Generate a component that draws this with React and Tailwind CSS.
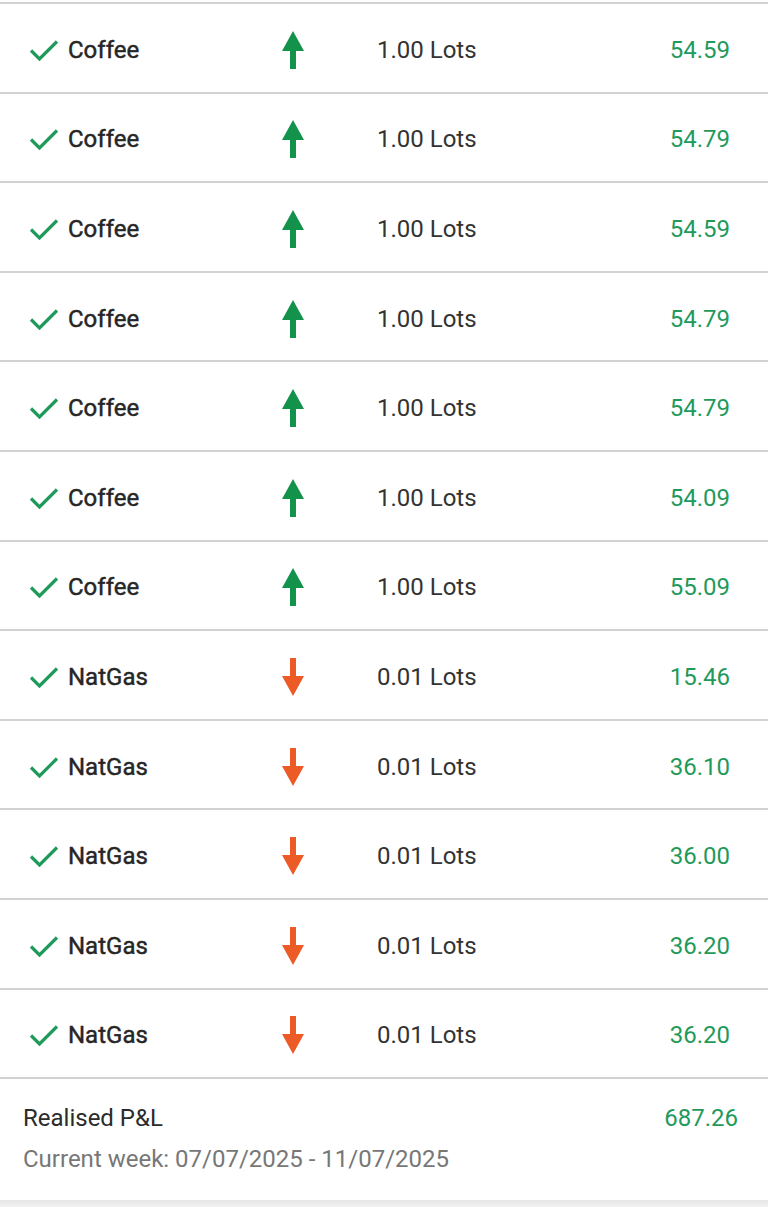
import React from "react";

const rows = [
  ["Coffee", "up", "1.00 Lots", "54.59"],
  ["Coffee", "up", "1.00 Lots", "54.79"],
  ["Coffee", "up", "1.00 Lots", "54.59"],
  ["Coffee", "up", "1.00 Lots", "54.79"],
  ["Coffee", "up", "1.00 Lots", "54.79"],
  ["Coffee", "up", "1.00 Lots", "54.09"],
  ["Coffee", "up", "1.00 Lots", "55.09"],
  ["NatGas", "down", "0.01 Lots", "15.46"],
  ["NatGas", "down", "0.01 Lots", "36.10"],
  ["NatGas", "down", "0.01 Lots", "36.00"],
  ["NatGas", "down", "0.01 Lots", "36.20"],
  ["NatGas", "down", "0.01 Lots", "36.20"],
];

function Check() {
  return (
    <svg width="30" height="22" viewBox="0 0 30 22" className="shrink-0">
      <path d="M2 11.5 L10.5 20 L28 2.5" fill="none" stroke="#1f9a5b" strokeWidth="3.2" strokeLinecap="butt" strokeLinejoin="miter" />
    </svg>
  );
}

function Arrow({ dir }) {
  if (dir === "up") {
    return (
      <svg width="22" height="38" viewBox="0 0 22 38">
        <path d="M11 0 L22 20 L14 20 L14 38 L8 38 L8 20 L0 20 Z" fill="#12924b" />
      </svg>
    );
  }
  return (
    <svg width="22" height="38" viewBox="0 0 22 38">
      <path d="M8 0 L14 0 L14 18 L22 18 L11 38 L0 18 L8 18 Z" fill="#ec5a26" />
    </svg>
  );
}

export default function App() {
  return (
    <div className="w-[768px] h-[1207px] bg-white overflow-hidden flex flex-col" style={{ fontFamily: "Roboto, 'Liberation Sans', sans-serif" }}>
      <div className="mt-[2px] border-t-2 border-[#d2d2d2]">
        {rows.map((r, i) => (
          <div key={i} className="h-[89.6px] border-b-2 border-[#d2d2d2] flex items-center pt-[4px]">
            <div className="w-[270px] pl-[29px] flex items-center gap-[9px]">
              <Check />
              <span className="text-[24px] font-normal tracking-[0px] text-[#262626] [-webkit-text-stroke:0.45px_#262626]">{r[0]}</span>
            </div>
            <div className="w-[46px] flex justify-center">
              <Arrow dir={r[1]} />
            </div>
            <div className="w-[61px]" />
            <span className="text-[24px] text-[#333333]">{r[2]}</span>
            <div className="flex-1 text-right pr-[38px] text-[24px] text-[#1f9a5b]">{r[3]}</div>
          </div>
        ))}
      </div>
      <div className="flex-1 flex flex-col pl-[23px] pr-[30px] pt-[23px]">
        <div className="flex justify-between items-center leading-[32px]">
          <span className="text-[24px] text-[#2b2b2b]">Realised P&amp;L</span>
          <span className="text-[24px] text-[#1f9a5b]">687.26</span>
        </div>
        <div className="mt-[9px] text-[24px] leading-[32px] text-[#777777]">Current week: 07/07/2025 - 11/07/2025</div>
      </div>
      <div className="h-[7px] bg-gradient-to-b from-[#e6e6e6] to-[#f2f2f2]" />
    </div>
  );
}
